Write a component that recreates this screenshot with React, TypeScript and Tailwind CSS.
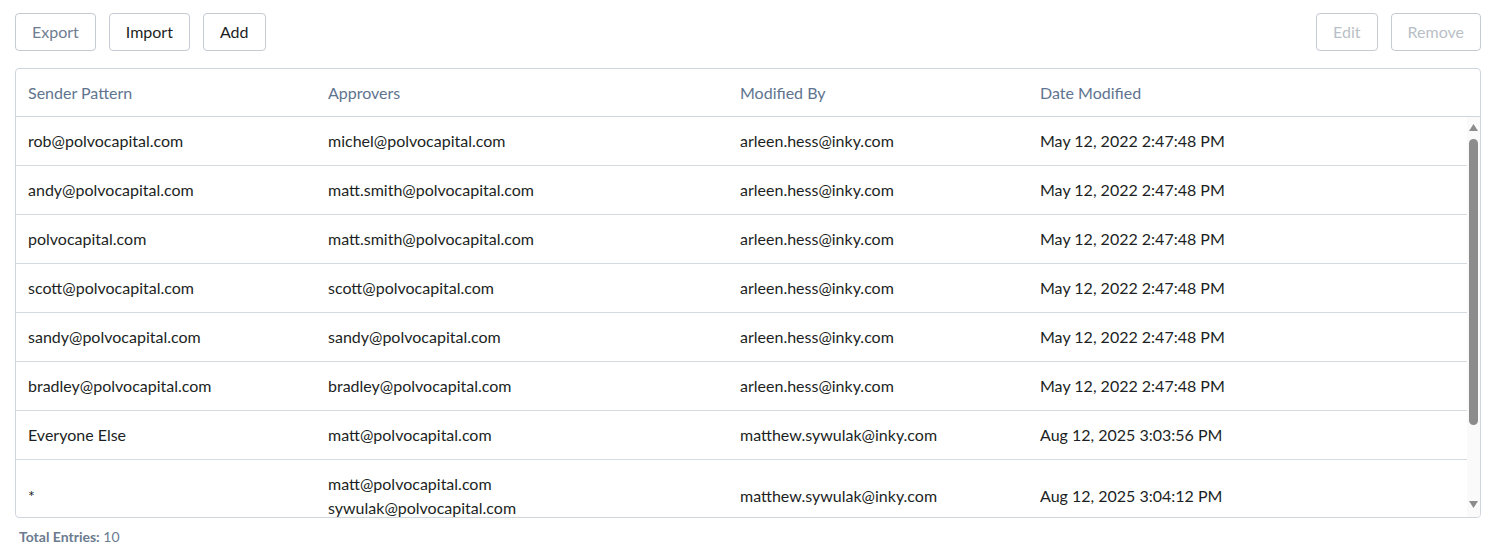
import React from "react";

type Rule = {
  sender: string;
  approvers: string[];
  modifiedBy: string;
  modifiedAt: string;
};

const rules: Rule[] = [
  { sender: "rob@polvocapital.com", approvers: ["michel@polvocapital.com"], modifiedBy: "arleen.hess@inky.com", modifiedAt: "May 12, 2022 2:47:48 PM" },
  { sender: "andy@polvocapital.com", approvers: ["matt.smith@polvocapital.com"], modifiedBy: "arleen.hess@inky.com", modifiedAt: "May 12, 2022 2:47:48 PM" },
  { sender: "polvocapital.com", approvers: ["matt.smith@polvocapital.com"], modifiedBy: "arleen.hess@inky.com", modifiedAt: "May 12, 2022 2:47:48 PM" },
  { sender: "scott@polvocapital.com", approvers: ["scott@polvocapital.com"], modifiedBy: "arleen.hess@inky.com", modifiedAt: "May 12, 2022 2:47:48 PM" },
  { sender: "sandy@polvocapital.com", approvers: ["sandy@polvocapital.com"], modifiedBy: "arleen.hess@inky.com", modifiedAt: "May 12, 2022 2:47:48 PM" },
  { sender: "bradley@polvocapital.com", approvers: ["bradley@polvocapital.com"], modifiedBy: "arleen.hess@inky.com", modifiedAt: "May 12, 2022 2:47:48 PM" },
  { sender: "Everyone Else", approvers: ["matt@polvocapital.com"], modifiedBy: "matthew.sywulak@inky.com", modifiedAt: "Aug 12, 2025 3:03:56 PM" },
  { sender: "*", approvers: ["matt@polvocapital.com", "sywulak@polvocapital.com"], modifiedBy: "matthew.sywulak@inky.com", modifiedAt: "Aug 12, 2025 3:04:12 PM" },
];

const cols = "grid grid-cols-[300px_412px_300px_1fr]";

function Button({ label, tone }: { label: string; tone: "dark" | "muted" | "disabled" }) {
  const color =
    tone === "dark" ? "text-[#1c1f24]" : tone === "muted" ? "text-[#6f7d91]" : "text-[#b9bfc6]";
  return (
    <button className={`h-[38px] px-4 rounded border border-[#c4cbd3] bg-white text-[16px] ${color}`}>
      {label}
    </button>
  );
}

// classic scrollbar: arrows + thumb, drawn so it shows in every browser
function ScrollBar() {
  return (
    <div className="w-[13px] shrink-0 bg-[#fafafa] flex flex-col items-center">
      <svg width="9" height="7" viewBox="0 0 9 7" className="mt-[7px]">
        <path d="M4.5 0 L9 7 L0 7 Z" fill="#8c8c8c" />
      </svg>
      <div className="mt-[8px] w-[9px] h-[286px] rounded-full bg-[#8c8c8c]" />
      <div className="flex-1" />
      <svg width="9" height="7" viewBox="0 0 9 7" className="mb-[9px]">
        <path d="M0 0 L9 0 L4.5 7 Z" fill="#8c8c8c" />
      </svg>
    </div>
  );
}

export default function App() {
  return (
    <div className="w-[1498px] h-[559px] bg-white px-[15px] pt-[13px] text-[16px] font-['Lato',sans-serif] text-[#1c1f24]">
      <div className="flex items-center justify-between pr-[2px]">
        <div className="flex gap-[13px]">
          <Button label="Export" tone="muted" />
          <Button label="Import" tone="dark" />
          <Button label="Add" tone="dark" />
        </div>
        <div className="flex gap-[13px]">
          <Button label="Edit" tone="disabled" />
          <Button label="Remove" tone="disabled" />
        </div>
      </div>

      <div className="mt-[17px] w-[1466px] rounded border border-[#cfd6de] overflow-hidden">
        <div className={`${cols} border-b border-[#cfd6de] text-[#60748f]`}>
          <div className="px-3 pt-3 pb-[11px] leading-6">Sender Pattern</div>
          <div className="px-3 pt-3 pb-[11px] leading-6">Approvers</div>
          <div className="px-3 pt-3 pb-[11px] leading-6">Modified By</div>
          <div className="px-3 pt-3 pb-[11px] leading-6">Date Modified</div>
        </div>
        <div className="h-[400px] flex">
          <div className="flex-1 overflow-hidden">
            {rules.map((r, i) => (
              <div key={i} className={`${cols} items-center border-b border-[#d4dae1]`}>
                <div className="px-3 py-3 leading-6">{r.sender}</div>
                <div className="px-3 py-3 leading-6">
                  {r.approvers.map((a) => (
                    <div key={a}>{a}</div>
                  ))}
                </div>
                <div className="px-3 py-3 leading-6">{r.modifiedBy}</div>
                <div className="px-3 py-3 leading-6">{r.modifiedAt}</div>
              </div>
            ))}
          </div>
          <ScrollBar />
        </div>
      </div>

      <div className="mt-[8px] pl-1 text-[14px] text-[#6b7b8f]">
        <span className="font-bold">Total Entries:</span> 10
      </div>
    </div>
  );
}
